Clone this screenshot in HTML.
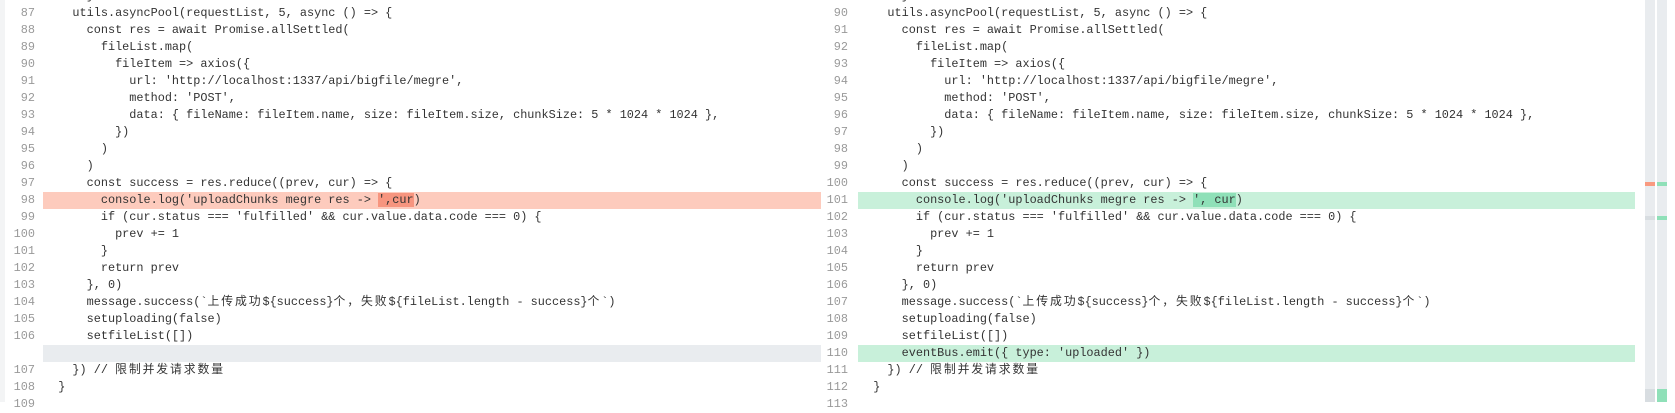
<!DOCTYPE html>
<html><head><meta charset="utf-8"><style>
*{margin:0;padding:0;box-sizing:border-box}
body{width:1675px;height:402px;overflow:hidden;background:#fff;position:relative;font-family:"Liberation Mono","Noto Sans CJK SC",monospace;font-size:11.85px;color:#333}
.strip{position:absolute;left:0;top:0;width:5px;height:402px;background:#f3f4f5}
.row{position:absolute;height:17px;line-height:17px;white-space:pre}
.ln{position:absolute;width:40px;text-align:right;color:#999;height:17px;line-height:17px}
.c{color:#333}
.del{background:#fdcbbd}
.delx{background:#f7957f}
.add{background:#c8f0da}
.addx{background:#8fe0b8}
.emp{background:#e9ecef}
.cj{letter-spacing:1.9px}
.track{position:absolute;top:0;width:10px;height:402px;background:#e9ecef}
.mk{position:absolute;width:10px}
</style></head><body>
<div class="strip"></div>

<!-- left panel -->
<div id="L"></div>
<!-- right panel -->
<div id="R"></div>

<div class="row del" style="left:43px;top:192px;width:778px"></div>
<div class="row emp" style="left:43px;top:345px;width:778px"></div>
<div class="row add" style="left:858px;top:192px;width:777px"></div>
<div class="row add" style="left:858px;top:345px;width:777px"></div>

<div class="track" style="left:1645px"></div>
<div class="track" style="left:1657px"></div>
<div class="mk" style="left:1645px;top:182px;height:4px;background:#f99a80"></div>
<div class="mk" style="left:1657px;top:182px;height:4px;background:#8fe0b8"></div>
<div class="mk" style="left:1645px;top:216px;height:4px;background:#d8dde1"></div>
<div class="mk" style="left:1657px;top:216px;height:4px;background:#8fe0b8"></div>
<div class="mk" style="left:1645px;top:389px;height:13px;background:#d8dde1"></div>
<div class="mk" style="left:1657px;top:389px;height:13px;background:#8fe0b8"></div>

<script>
const common=[
"    utils.asyncPool(requestList, 5, async () => {",
"      const res = await Promise.allSettled(",
"        fileList.map(",
"          fileItem => axios({",
"            url: 'http://localhost:1337/api/bigfile/megre',",
"            method: 'POST',",
"            data: { fileName: fileItem.name, size: fileItem.size, chunkSize: 5 * 1024 * 1024 },",
"          })",
"        )",
"      )",
"      const success = res.reduce((prev, cur) => {",
"CONSOLE",
"        if (cur.status === 'fulfilled' && cur.value.data.code === 0) {",
"          prev += 1",
"        }",
"        return prev",
"      }, 0)",
"MSG",
"      setuploading(false)",
"      setfileList([])"];
function esc(s){return s.replace(/&/g,'&amp;').replace(/</g,'&lt;').replace(/>/g,'&gt;')}
const msg='      message.success(`<span class="cj">上传成功</span>${success}<span class="cj">个，失败</span>${fileList.length - success}<span class="cj">个</span>`)';
const tail='    }) // <span class="cj">限制并发请求数量</span>';
function build(id,start,lnRight,codeX,side){
  let h='';let top=-12;
  const add=(n,html)=>{ if(n!==null){h+=`<div class="ln" style="left:${lnRight-40}px;top:${top}px">${n}</div>`}
    h+=`<div class="row" style="left:${codeX}px;top:${top}px;z-index:2">${html}</div>`;top+=17;};
  let n=start;
  add(n++,esc("      }"));
  common.forEach(l=>{
    let html;
    if(l==="CONSOLE"){
      html= side==='L' ? "        console.log('uploadChunks megre res -&gt; <span class=\"delx\">',cur</span>)"
                       : "        console.log('uploadChunks megre res -&gt; <span class=\"addx\">', cur</span>)";
    } else if(l==="MSG") html=msg; else html=esc(l);
    add(n++,html);
  });
  if(side==='L'){ add(null,''); } else { add(n++,esc("      eventBus.emit({ type: 'uploaded' })")); }
  add(n++,tail);
  add(n++,"  }");
  add(n++,"");
  document.getElementById(id).innerHTML=h;
}
build('L',86,35,44,'L');
build('R',89,848,859,'R');
</script>
</body></html>
